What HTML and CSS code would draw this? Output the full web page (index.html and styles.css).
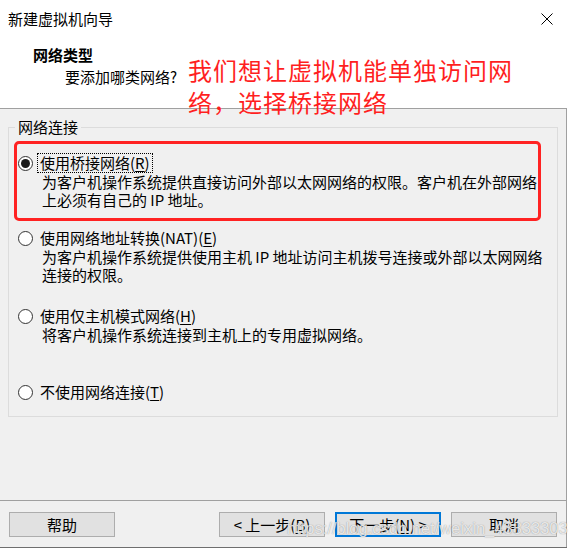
FILE: index.html
```html
<!DOCTYPE html>
<html lang="zh-CN">
<head>
<meta charset="utf-8">
<title>新建虚拟机向导</title>
<link rel="stylesheet" href="styles.css">
</head>
<body>
<div class="window">
  <div class="titlebar">
    <span class="title">新建虚拟机向导</span>
    <svg class="close" width="12" height="12" viewBox="0 0 12 12"><path d="M0.5 0.5L11.5 11.5M11.5 0.5L0.5 11.5" stroke="#000" stroke-width="1" fill="none"/></svg>
  </div>
  <div class="header">
    <div class="h-title">网络类型</div>
    <div class="h-sub">要添加哪类网络?</div>
  </div>
  <div class="content">
    <fieldset class="group">
      <legend>网络连接</legend>
      <div class="option opt1">
        <div class="opt-row"><span class="radio checked"></span><span class="label focus">使用桥接网络(<u>R</u>)</span></div>
        <div class="desc">为客户机操作系统提供直接访问外部以太网网络的权限。客户机在外部网络<br>上必须有自己的 IP 地址。</div>
      </div>
      <div class="option opt2">
        <div class="opt-row"><span class="radio"></span><span class="label">使用网络地址转换(NAT)(<u>E</u>)</span></div>
        <div class="desc">为客户机操作系统提供使用主机 IP 地址访问主机拨号连接或外部以太网网络<br>连接的权限。</div>
      </div>
      <div class="option opt3">
        <div class="opt-row"><span class="radio"></span><span class="label">使用仅主机模式网络(<u>H</u>)</span></div>
        <div class="desc">将客户机操作系统连接到主机上的专用虚拟网络。</div>
      </div>
      <div class="option opt4">
        <div class="opt-row"><span class="radio"></span><span class="label">不使用网络连接(<u>T</u>)</span></div>
      </div>
    </fieldset>
    <div class="footer">
      <button class="btn">帮助</button>
      <button class="btn push">&lt; 上一步(<u>B</u>)</button>
      <button class="btn default">下一步(<u>N</u>) &gt;</button>
      <button class="btn">取消</button>
    </div>
  </div>
  <div class="note">我们想让虚拟机能单独访问网<br>络，选择桥接网络</div>
  <div class="highlight"></div>
  <div class="watermark">https://blog.csdn.net/weixin_43833303</div>
</div>
</body>
</html>
```
FILE: styles.css
```css
html, body {
  margin: 0;
  padding: 0;
  background: #ffffff;
}
body {
  font-family: "Noto Sans CJK SC", "Noto Sans", sans-serif;
  font-size: 15px;
  color: #000;
}
.window {
  position: relative;
  width: 567px;
  height: 548px;
  box-sizing: border-box;
  border-bottom: 1px solid #6e6e6e;
  display: flex;
  flex-direction: column;
  background: #fff;
}
.titlebar {
  height: 37px;
  flex: none;
  display: flex;
  align-items: center;
  justify-content: space-between;
  padding: 0 14px 0 8px;
}
.title {
  line-height: 20px;
}
.close {
  display: block;
  margin-top: 0;
}
.header {
  height: 71px;
  flex: none;
  border-bottom: 1px solid #a0a0a0;
}
.h-title {
  font-weight: bold;
  line-height: 20px;
  margin-top: 8px;
  padding-left: 33px;
}
.h-sub {
  line-height: 20px;
  margin-top: 2px;
  padding-left: 65px;
}
.content {
  flex: 1;
  background: #f0f0f0;
  border-right: 1px solid #a0a0a0;
  display: flex;
  flex-direction: column;
}
.group {
  margin: 9px 8px 0 8px;
  padding: 0 9px 14px 9px;
  border: 1px solid #dcdcdc;
  min-width: 0;
}
.group legend {
  padding: 0 3px;
  margin-left: -3px;
  line-height: 18px;
  font-size: 15px;
}
.option {
  display: flex;
  flex-direction: column;
}
.opt1 { margin-top: 17px; }
.opt2 { margin-top: 19px; }
.opt3 { margin-top: 22px; }
.opt4 { margin-top: 38px; }
.opt-row {
  display: flex;
  align-items: center;
  height: 20px;
}
.radio {
  width: 15px;
  height: 15px;
  box-sizing: border-box;
  border: 1px solid #333;
  border-radius: 50%;
  background: #fff;
  flex: none;
  position: relative;
}
.radio.checked::after {
  content: "";
  position: absolute;
  left: 2px;
  top: 2px;
  width: 9px;
  height: 9px;
  border-radius: 50%;
  background: #1a1a1a;
}
.label {
  margin-left: 4px;
  padding: 0 2px;
  border: 1px dotted transparent;
  line-height: 18px;
  white-space: nowrap;
}
.label.focus {
  border-color: #000;
}
.desc {
  margin-left: 24px;
  line-height: 18px;
  white-space: nowrap;
}
u {
  text-decoration: underline;
  text-underline-offset: 2px;
}
.footer {
  margin-top: auto;
  border-top: 1px solid #a0a0a0;
  padding: 11px 9px 10px 9px;
  display: flex;
  gap: 10px;
}
.btn {
  width: 106px;
  height: 25px;
  box-sizing: border-box;
  padding: 0;
  margin: 0;
  background: #e1e1e1;
  border: 1px solid #adadad;
  font-family: "Noto Sans CJK SC", "Noto Sans", sans-serif;
  font-size: 15px;
  line-height: 21px;
  color: #000;
}
.btn.push {
  margin-left: auto;
}
.btn.default {
  border: 2px solid #0078d7;
}
.note {
  position: absolute;
  left: 188px;
  top: 54px;
  font-size: 24px;
  letter-spacing: 1px;
  line-height: 32px;
  color: #ff1f1f;
  white-space: nowrap;
}
.highlight {
  position: absolute;
  left: 14px;
  top: 141px;
  width: 527px;
  height: 80px;
  box-sizing: border-box;
  border: 3px solid #ff2222;
  border-radius: 5px;
}
.watermark {
  position: absolute;
  left: 287px;
  top: 518px;
  font-family: "Liberation Sans", Arial, sans-serif;
  font-size: 16.5px;
  line-height: 20px;
  color: rgba(255, 255, 255, 0.8);
  text-shadow: 0 0 1px rgba(90, 90, 90, 0.7);
  white-space: nowrap;
}
```
